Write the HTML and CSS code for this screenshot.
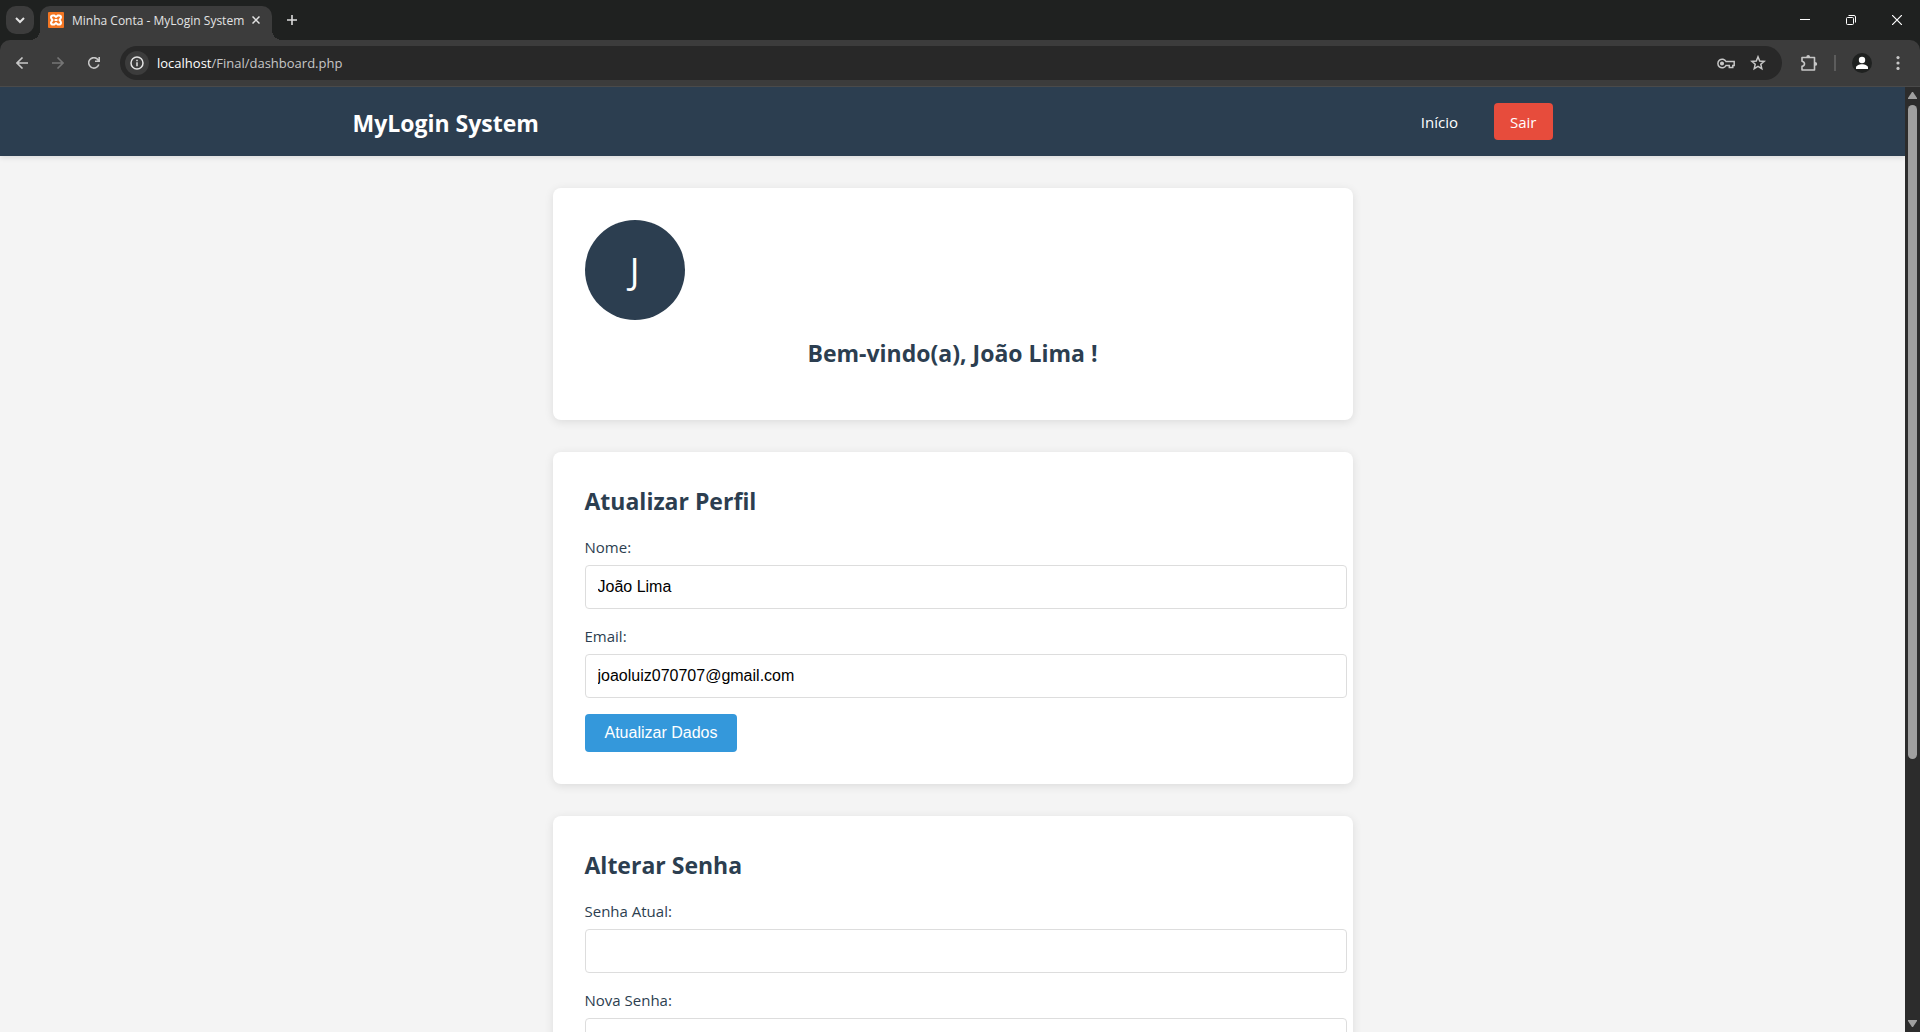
FILE: index.html
```html
<!DOCTYPE html>
<html lang="pt-BR">
<head>
<meta charset="utf-8">
<title>Minha Conta - MyLogin System</title>
<link rel="stylesheet" href="styles.css">
</head>
<body>
<div class="tabstrip">
  <button class="tab-search" aria-label="Pesquisar guias"><svg width="10" height="10" viewBox="0 0 10 10" fill="none" stroke="#e3e3e3" stroke-width="2"><path d="M1 3l4 4 4-4"/></svg></button>
  <div class="tab">
    <svg width="16" height="16" viewBox="0 0 16 16"><rect width="16" height="16" rx="1" fill="#f37623"/><path d="M5 3.500h1.200L8 5l1.800-1.500H11c1.200 0 2 .8 2 1.800S12 7 11.500 8c.5 1 1.500 1.500 1.500 2.700s-.8 1.800-2 1.800H9.800L8 11l-1.800 1.500H5c-1.200 0-2-.8-2-1.800S4 9 4.500 8C4 7 3 6.500 3 5.300s.8-1.800 2-1.800z" fill="none" stroke="#fff" stroke-width="2"/><path d="M6.500 8h3" stroke="#fff" stroke-width="2"/></svg>
    <span class="tab-title">Minha Conta - MyLogin System</span>
    <button class="icon-button" aria-label="Fechar guia"><svg width="8" height="8" viewBox="0 0 8 8" stroke="#e3e3e3" stroke-width="1.500"><path d="M.5.5l7 7M7.500.5l-7 7"/></svg></button>
  </div>
  <button class="icon-button new-tab" aria-label="Nova guia"><svg width="10" height="10" viewBox="0 0 10 10" stroke="#dcdcdc" stroke-width="1.600"><path d="M5 0v10M0 5h10"/></svg></button>
  <div class="window-controls">
    <button class="icon-button" aria-label="Minimizar"><svg width="10" height="10" viewBox="0 0 10 10" stroke="#fff"><path d="M0 4.500h10"/></svg></button>
    <button class="icon-button" aria-label="Restaurar"><svg width="10" height="10" viewBox="0 0 10 10" fill="none" stroke="#fff"><rect x=".5" y="2.500" width="7" height="7" rx="1"/><path d="M2.500.5H8A1.500 1.500 0 0 1 9.500 2v5.500"/></svg></button>
    <button class="icon-button" aria-label="Fechar"><svg width="10" height="10" viewBox="0 0 10 10" stroke="#fff" stroke-width="1.200"><path d="M0 0l10 10M10 0L0 10"/></svg></button>
  </div>
</div>
<div class="toolbar">
  <button class="icon-button nav-button" aria-label="Voltar"><svg width="12" height="12" viewBox="0 0 12 12" fill="none" stroke="#c7c7c7" stroke-width="1.600"><path d="M12 6H1M6.500.5L1 6l5.500 5.500"/></svg></button>
  <button class="icon-button nav-button" aria-label="Avançar"><svg width="12" height="12" viewBox="0 0 12 12" fill="none" stroke="#757575" stroke-width="1.600"><path d="M0 6h11M5.500.5L11 6l-5.500 5.500"/></svg></button>
  <button class="icon-button nav-button" aria-label="Recarregar"><svg width="12" height="12" viewBox="0 0 12 12" fill="none" stroke="#c7c7c7" stroke-width="1.600"><path d="M10.800 7.500A5.200 5.200 0 1 1 10 2.700L11.200 4M11.200 0v4.300H7"/></svg></button>
  <div class="omnibox">
    <button class="icon-button site-info" aria-label="Informações do site"><svg width="14" height="14" viewBox="0 0 14 14" fill="none" stroke="#e3e3e3" stroke-width="1.500"><circle cx="7" cy="7" r="6"/><path d="M7 6.300V10.300M7 3.700v1.500"/></svg></button>
    <span class="url"><span class="host">localhost</span>/Final/dashboard.php</span>
    <button class="icon-button" aria-label="Senhas"><svg width="18" height="11" viewBox="0 0 18 11" fill="none" stroke="#c7c7c7" stroke-width="1.500"><path d="M9 3.500A4.300 4.300 0 1 0 9 7.500h3.300v2h3.500v-2h1.400v-4z"/><circle cx="5" cy="5.500" r="1.300" fill="#c7c7c7"/></svg></button>
    <button class="icon-button star" aria-label="Favoritos"><svg width="16" height="16" viewBox="0 0 16 16" fill="none" stroke="#c7c7c7" stroke-width="1.500"><path d="M8 1.800l1.700 4.200 4.500.4-3.400 2.900 1 4.400L8 11.400l-3.800 2.300 1-4.400L1.800 6.400l4.500-.4z"/></svg></button>
  </div>
  <button class="icon-button extensions" aria-label="Extensões"><svg width="18" height="18" viewBox="0 0 18 18" fill="none" stroke="#c7c7c7" stroke-width="1.600"><path d="M2 3.500h12.500V16H2v-3.600q2.500-.6 2.500-2.600T2 7.200z" stroke-linejoin="round"/><path d="M6.300 3.200a1.900 2.200 0 0 1 3.800 0zM15 8a2.200 1.900 0 0 1 0 3.800z" fill="#c7c7c7" stroke="none"/></svg></button>
  <span class="separator"></span>
  <button class="icon-button profile" aria-label="Perfil"><svg width="20" height="20" viewBox="0 0 20 20"><circle cx="10" cy="10" r="10" fill="#1f2120"/><circle cx="10" cy="7" r="3.200" fill="#fff"/><path d="M4 16v-1.500c0-2 3-3.300 6-3.300s6 1.300 6 3.300V16z" fill="#fff"/></svg></button>
  <button class="icon-button" aria-label="Menu"><svg width="4" height="14" viewBox="0 0 4 14" fill="#c7c7c7"><circle cx="2" cy="1.600" r="1.600"/><circle cx="2" cy="7" r="1.600"/><circle cx="2" cy="12.400" r="1.600"/></svg></button>
</div>
<div class="viewport">
  <div class="page">
    <header class="header">
      <div class="container">
        <h1 class="logo">MyLogin System</h1>
        <nav class="nav">
          <a class="nav-link" href="#">Início</a>
          <a class="nav-link logout" href="#">Sair</a>
        </nav>
      </div>
    </header>
    <main class="dashboard">
      <section class="card">
        <div class="avatar">J</div>
        <h2 class="title welcome">Bem-vindo(a), João Lima !</h2>
      </section>
      <section class="card">
        <h2 class="title">Atualizar Perfil</h2>
        <form class="form">
          <label class="label" for="nome">Nome:</label>
          <input class="input" id="nome" type="text" value="João Lima">
          <label class="label" for="email">Email:</label>
          <input class="input" id="email" type="email" value="joaoluiz070707@gmail.com">
          <button class="submit" type="button">Atualizar Dados</button>
        </form>
      </section>
      <section class="card">
        <h2 class="title">Alterar Senha</h2>
        <form class="form">
          <label class="label" for="senha-atual">Senha Atual:</label>
          <input class="input" id="senha-atual" type="password">
          <label class="label" for="nova-senha">Nova Senha:</label>
          <input class="input" id="nova-senha" type="password">
        </form>
      </section>
    </main>
  </div>
  <div class="scrollbar">
    <svg width="9" height="7" viewBox="0 0 9 7" fill="#9f9f9f"><path d="M4 0h1l4 6v1H0V6z"/></svg>
    <div class="track"><div class="thumb"></div></div>
    <svg width="9" height="7" viewBox="0 0 9 7" fill="#9f9f9f"><path d="M4 7h1l4-6V0H0v1z"/></svg>
  </div>
</div>
</body>
</html>
```
FILE: styles.css
```css
body {
  margin: 0;
  height: 100vh;
  display: flex;
  flex-direction: column;
  overflow: hidden;
  font-family: "Open Sans", "Noto Sans", sans-serif;
  font-size: 15px;
  line-height: 21px;
  background: #1f2120;
  color: #2c3e50;
}

button {
  border: 0;
  padding: 0;
  font: inherit;
}

svg {
  display: block;
}

/* Browser chrome */
.tabstrip {
  display: flex;
  height: 40px;
  flex: none;
  align-items: center;
  padding-left: 6px;
  background: #1f2120;
}

.tab-search {
  display: grid;
  place-items: center;
  width: 28px;
  height: 28px;
  border-radius: 10px;
  background: #3c3c3c;
}

.tab {
  position: relative;
  display: flex;
  align-items: center;
  align-self: flex-end;
  box-sizing: border-box;
  width: 232px;
  height: 34px;
  margin-left: 6px;
  padding: 0 12px 6px 8px;
  border-radius: 10px 10px 0 0;
  background: #3c3c3c;
}

.tab::before,
.tab::after {
  content: "";
  position: absolute;
  bottom: 0;
  width: 10px;
  height: 10px;
}

.tab::before {
  right: 100%;
  background: radial-gradient(circle at 0 0, transparent 10px, #3c3c3c 10px);
}

.tab::after {
  left: 100%;
  background: radial-gradient(circle at 100% 0, transparent 10px, #3c3c3c 10px);
}

.tab-title {
  flex: 1;
  margin-left: 8px;
  font-size: 12px;
  color: #e3e3e3;
  white-space: nowrap;
}

.icon-button {
  display: grid;
  place-items: center;
  background: none;
}

.new-tab {
  margin-left: 15px;
}

.window-controls {
  display: flex;
  gap: 36px;
  margin-left: auto;
  padding-right: 18px;
}

.toolbar {
  display: flex;
  align-items: center;
  flex: none;
  box-sizing: border-box;
  height: 47px;
  padding: 0 20px 0 4px;
  border-bottom: 1px solid #4a4a4a;
  border-radius: 10px 10px 0 0;
  background: #3c3c3c;
}

.nav-button {
  width: 36px;
}

.omnibox {
  display: flex;
  flex: 1;
  align-items: center;
  box-sizing: border-box;
  height: 34px;
  margin-left: 8px;
  padding: 0 16px 0 5px;
  border-radius: 17px;
  background: #282828;
}

.site-info {
  width: 24px;
  height: 24px;
  border-radius: 50%;
  background: #3c3c3c;
}

.url {
  flex: 1;
  margin-left: 8px;
  font-size: 13px;
  color: #c7c7c7;
}

.host {
  color: #fff;
}

.star {
  margin-left: 15px;
}

.extensions {
  margin-left: 18px;
}

.separator {
  width: 2px;
  height: 16px;
  margin: 0 16px;
  background: #5c5c5c;
}

.profile {
  margin-right: 24px;
}

.viewport {
  display: flex;
  flex: 1;
  min-height: 0;
}

.page {
  flex: 1;
  overflow: hidden;
  background: #f4f4f4;
}

.scrollbar {
  display: flex;
  flex-direction: column;
  align-items: center;
  gap: 6px;
  box-sizing: border-box;
  width: 15px;
  padding: 5px 0;
  background: #2c2c2c;
}

.track {
  flex: 1;
}

.thumb {
  width: 9px;
  height: 72%;
  border-radius: 5px;
  background: #9f9f9f;
}

/* Site */
.header {
  padding: 16px;
  background: #2c3e50;
  box-shadow: 0 2px 5px rgba(0, 0, 0, 0.1);
}

.container {
  display: flex;
  justify-content: space-between;
  align-items: center;
  max-width: 1200px;
  margin: 0 auto;
}

.logo {
  margin: 0;
  padding-top: 2px;
  font-size: 23px;
  line-height: 34px;
  color: #fff;
}

.nav {
  display: flex;
  gap: 20px;
}

.nav-link {
  padding: 9px 16px 7px;
  border-radius: 4px;
  color: #fff;
  text-decoration: none;
}

.logout {
  background: #e74c3c;
}

.dashboard {
  display: grid;
  gap: 32px;
  max-width: 800px;
  margin: 32px auto;
}

.card {
  padding: 32px;
  border-radius: 8px;
  background: #fff;
  box-shadow: 0 2px 10px rgba(0, 0, 0, 0.1);
}

.avatar {
  display: grid;
  place-items: center;
  width: 100px;
  height: 100px;
  margin-bottom: 16px;
  border-radius: 50%;
  background: #2c3e50;
  color: #fff;
  font-size: 36px;
}

.title {
  margin: 0 0 18px;
  font-size: 23px;
  line-height: 34px;
}

.welcome {
  text-align: center;
}

.label {
  display: block;
  margin-bottom: 6px;
  line-height: 23px;
}

.input {
  display: block;
  width: 100%;
  height: 18px;
  margin-bottom: 16px;
  padding: 12px;
  border: 1px solid #ddd;
  border-radius: 4px;
  font: 16px/18px "Liberation Sans", Arial, sans-serif;
  color: #000;
}

.submit {
  display: block;
  padding: 10px 20px;
  border-radius: 4px;
  background: #3498db;
  color: #fff;
  font: 16px/18px "Liberation Sans", Arial, sans-serif;
}
```
